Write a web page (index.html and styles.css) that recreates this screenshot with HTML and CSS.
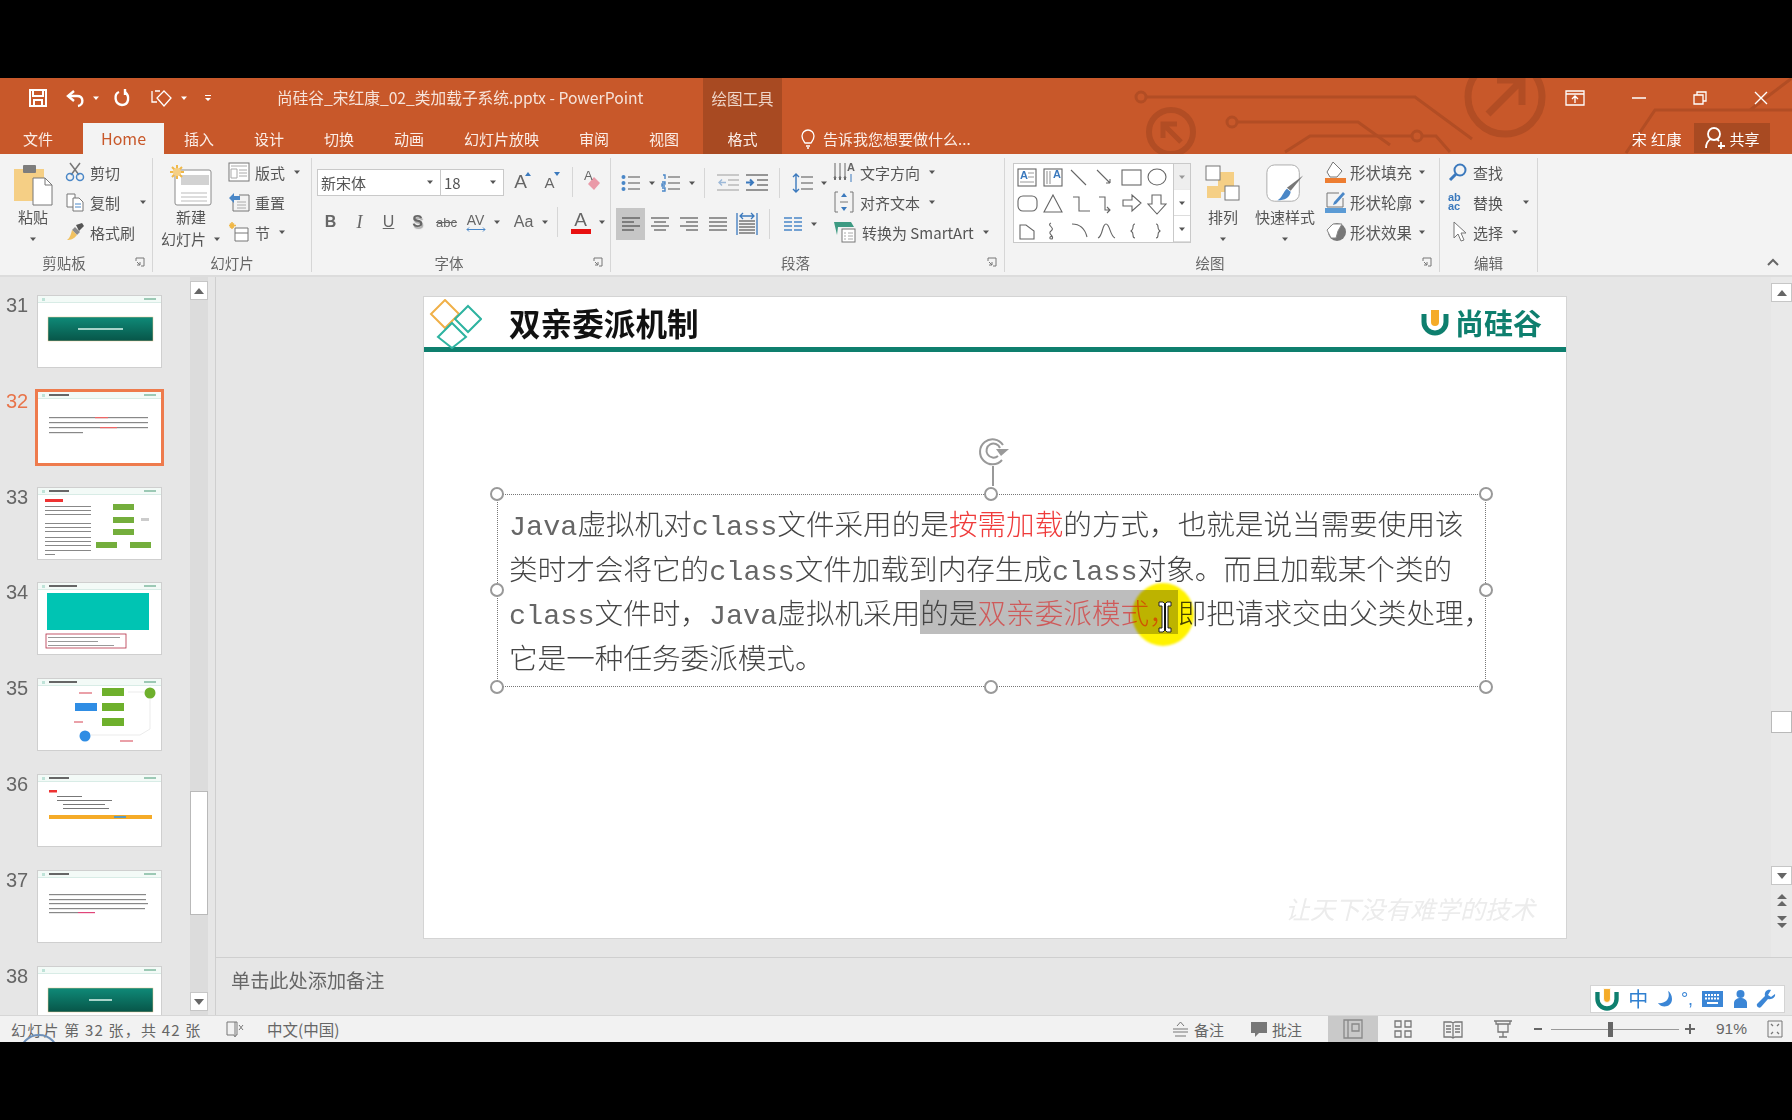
FILE: index.html
```html
<!DOCTYPE html>
<html lang="zh-CN">
<head>
  <meta charset="UTF-8" />
  <title>尚硅谷_宋红康_02_类加载子系统.pptx - PowerPoint</title>
  <link rel="stylesheet" href="styles.css">
</head>
<body>
<svg class="defs" width="0" height="0">
  <symbol id="th-head" viewBox="0 0 123 71">
    <rect x="0" y="0" width="123" height="6" fill="#f3faf7"/>
    <rect x="0" y="6" width="123" height=".6" fill="#bfe0d6"/>
    <rect x="4" y="2" width="3" height="3" fill="#bfe3d8"/>
    <rect x="106" y="2" width="12" height="2" fill="#9cc9b5"/>
  </symbol>
  <symbol id="caret" viewBox="0 0 8 8"><path d="M1 2.500h6L4 6z" fill="currentColor"/></symbol>
</svg>

<div class="app">
  <header class="top">
    <svg class="circuit" width="1010" height="76" viewBox="782 78 1010 76" fill="none" stroke="#b24d24" stroke-width="3">
      <path d="M1146 97h269l57 42"/><circle cx="1141" cy="97" r="5"/>
      <path d="M1237 122h121l32 23"/><circle cx="1232" cy="122" r="5"/>
      <path d="M1285 152l25-16h102"/><path d="M1422 136h14l14 16"/><circle cx="1417" cy="136" r="5"/>
      <circle cx="1171" cy="132" r="22" stroke-width="6"/><path d="M1181 142l-18-18m0 14v-14h14" stroke-width="5"/>
      <circle cx="1505" cy="97" r="37" stroke-width="7"/><path d="M1488 114l34-34m-25 0h25v25" stroke-width="7"/>
      <path d="M1626 153l29-43h137M1750 110l42-32"/>
    </svg>
    <div class="title-row">
      <div class="qat">
        <svg class="q-save" width="20" height="20" viewBox="0 0 20 20" fill="none" stroke="#fff" stroke-width="2"><path d="M2 2h16v16H2z"/><path d="M5 2v6h10V2M6 18v-6h8v6"/></svg>
        <svg class="q-undo" width="21" height="20" viewBox="0 0 21 20" fill="none" stroke="#fff" stroke-width="2.400"><path d="M9 3L3 8l6 5"/><path d="M3 8h9c7 0 7 9 1 10"/></svg>
        <svg class="q-car" width="8" height="8"><use href="#caret"/></svg>
        <svg class="q-redo" width="18" height="20" viewBox="0 0 18 20" fill="none" stroke="#fff" stroke-width="2.400"><path d="M6 4C1 6 1 16 9 17c7 0 8-9 3-13"/><path d="M12 1v6"/></svg>
        <svg class="q-touch" width="24" height="20" viewBox="0 0 24 20" fill="none" stroke="#fff" stroke-width="1.300"><path d="M5 3h5M2 3v11h5"/><path d="M14 3l7 7-7 8-7-8z"/></svg>
        <svg class="q-car" width="8" height="8"><use href="#caret"/></svg>
        <svg class="q-more" width="10" height="10" viewBox="0 0 10 10" fill="#fff"><path d="M2 2h6v1H2zM2 5h6L5 8z"/></svg>
      </div>
      <div class="doc-title">尚硅谷_宋红康_02_类加载子系统.pptx - PowerPoint</div>
      <div class="ctx-head">绘图工具</div>
      <div class="win-btns">
        <svg width="20" height="16" viewBox="0 0 20 16" fill="none" stroke="#fff" stroke-width="1.300"><path d="M1 1h18v14H1zM1 4h18M10 13V6M7 9l3-3 3 3"/></svg>
        <svg width="14" height="16" viewBox="0 0 14 16" stroke="#fff" stroke-width="1.500"><path d="M0 8h14"/></svg>
        <svg width="14" height="14" viewBox="0 0 14 14" fill="none" stroke="#fff" stroke-width="1.300"><path d="M1 4h9v9H1zM4 4V1h9v9h-3"/></svg>
        <svg width="14" height="14" viewBox="0 0 14 14" stroke="#fff" stroke-width="1.400"><path d="M1 1l12 12M13 1L1 13"/></svg>
      </div>
    </div>
    <nav class="tab-row">
      <a class="tab tab-file">文件</a>
      <a class="tab tab-home">Home</a>
      <a class="tab">插入</a>
      <a class="tab">设计</a>
      <a class="tab">切换</a>
      <a class="tab">动画</a>
      <a class="tab">幻灯片放映</a>
      <a class="tab">审阅</a>
      <a class="tab">视图</a>
      <a class="tab tab-ctx">格式</a>
      <span class="tell">
        <svg width="14" height="20" viewBox="0 0 14 20" fill="none" stroke="#fff" stroke-width="1.300"><path d="M4 14C2 11 1 10 1 7a6 6 0 0 1 12 0c0 3-1 4-3 7zM5 17h4M6 19h2"/></svg>
        告诉我您想要做什么...
      </span>
      <span class="user">宋 红康</span>
      <span class="share">
        <svg width="22" height="24" viewBox="0 0 22 24" fill="none" stroke="#fff" stroke-width="1.800"><circle cx="10" cy="8" r="6"/><path d="M2 22c0-5 3-8 5-9M13 13l2 2M17 16v7M14 20h7"/></svg>
        共享
      </span>
    </nav>
  </header>

  <section class="ribbon">
    <div class="group g-clip">
      <div class="group-body">
        <div class="big-btn paste">
          <svg class="big-ico" width="40" height="42" viewBox="0 0 40 42"><rect x="1" y="5" width="30" height="32" fill="#f5cf85"/><rect x="10" y="1" width="13" height="8" rx="1" fill="#7d7d7d"/><path d="M20 14h12l7 7v20H20z" fill="#fff" stroke="#777"/><path d="M32 14v7h7" fill="none" stroke="#777"/></svg>
          <span>粘贴</span>
          <svg class="big-car" width="8" height="8"><use href="#caret"/></svg>
        </div>
        <div class="small-col">
          <div class="row"><svg width="20" height="20" viewBox="0 0 20 20" fill="none" stroke-width="1.500"><path d="M5 1l9 12M15 1L6 13" stroke="#777"/><circle cx="5" cy="15" r="3.500" stroke="#4a87c7"/><circle cx="15" cy="15" r="3.500" stroke="#4a87c7"/></svg><span>剪切</span></div>
          <div class="row"><svg width="20" height="20" viewBox="0 0 20 20" fill="#fff" stroke="#777"><path d="M2 2h8v13H2z"/><path d="M8 6h6l4 4v9H8z"/><path d="M10 12h6M10 15h6" stroke="#4a87c7"/></svg><span>复制</span><svg class="car wide" width="8" height="8"><use href="#caret"/></svg></div>
          <div class="row"><svg width="20" height="20" viewBox="0 0 20 20"><path d="M11 3l6-2 2 3-5 5z" fill="#555"/><path d="M10 5l5 5-3 3-5-5z" fill="#8a8a8a"/><path d="M7 8l5 5c-3 4-6 5-10 5 3-2 4-6 5-10z" fill="#f1c15f"/></svg><span>格式刷</span></div>
        </div>
      </div>
      <div class="group-label"><span>剪贴板</span><svg class="launch" width="10" height="10" viewBox="0 0 10 10" fill="none" stroke="#777"><path d="M1 4V1h8v8H6M2 5l3 3M5 5v3H2"/></svg></div>
    </div>

    <div class="group g-slides">
      <div class="group-body">
        <div class="big-btn new-slide">
          <svg class="big-ico" width="44" height="42" viewBox="0 0 44 42"><rect x="6" y="6" width="36" height="35" rx="2" fill="#fff" stroke="#8a8a8a"/><rect x="12" y="11" width="28" height="10" fill="#d2d2d2"/><path d="M12 29h26M12 33h26M12 37h26" stroke="#bbb"/><g stroke="#f0b848" stroke-width="2"><path d="M8 1v14M1 8h14M3 3l10 10M13 3L3 13"/></g><circle cx="8" cy="8" r="4" fill="#f5cf85"/></svg>
          <span>新建</span>
          <span class="with-car">幻灯片<svg class="car" width="8" height="8"><use href="#caret"/></svg></span>
        </div>
        <div class="small-col">
          <div class="row"><svg width="22" height="20" viewBox="0 0 22 20" fill="#fff" stroke="#777"><rect x="1" y="1" width="20" height="18"/><path d="M3 4h16M3 7h6v9H3zM11 8h8M11 11h8M11 14h8" stroke="#aaa"/></svg><span>版式</span><svg class="car" width="8" height="8"><use href="#caret"/></svg></div>
          <div class="row"><svg width="22" height="20" viewBox="0 0 22 20" fill="none" stroke="#777"><path d="M5 7v12h16V3H11"/><path d="M9 10h9M9 13h9M9 16h9" stroke="#aaa"/><path d="M1 6l5-5v3h6v4H6v3z" fill="#4a87c7" stroke="none"/></svg><span>重置</span></div>
          <div class="row"><svg width="22" height="20" viewBox="0 0 22 20" fill="#fff" stroke="#777"><path d="M7 6h13v13H7zM7 11h13"/><g stroke="#f0b848" stroke-width="1.500"><path d="M4 0v7M1 3.500h7M2 1.500l4 4M6 1.500l-4 4"/></g></svg><span>节</span><svg class="car" width="8" height="8"><use href="#caret"/></svg></div>
        </div>
      </div>
      <div class="group-label center"><span>幻灯片</span></div>
    </div>

    <div class="group g-font">
      <div class="group-body col">
        <div class="tool-row first">
          <div class="combo font-name"><span>新宋体</span><svg width="8" height="8"><use href="#caret"/></svg></div>
          <div class="combo font-size"><span>18</span><svg width="8" height="8"><use href="#caret"/></svg></div>
          <span class="ib glyph big-a">A<i class="up"></i></span>
          <span class="ib glyph small-a">A<i class="down"></i></span>
          <span class="sep"></span>
          <span class="ib eraser"><span class="glyph era-a">A</span><svg width="20" height="20" viewBox="0 0 20 20"><path d="M11 5l6 6-6 7-6-6z" fill="#ea9aa8"/></svg></span>
        </div>
        <div class="tool-row second">
          <span class="ib glyph bold">B</span>
          <span class="ib glyph ital">I</span>
          <span class="ib glyph under">U</span>
          <span class="ib glyph shad">S</span>
          <span class="ib glyph strike">abc</span>
          <span class="ib glyph av">AV<svg width="22" height="5" viewBox="0 0 22 5" fill="none" stroke="#4a87c7"><path d="M2 2.500h18M4 .5l-2 2 2 2M18 .5l2 2-2 2"/></svg></span>
          <svg class="car" width="8" height="8"><use href="#caret"/></svg>
          <span class="ib glyph case">Aa</span>
          <svg class="car" width="8" height="8"><use href="#caret"/></svg>
          <span class="sep"></span>
          <span class="ib glyph color">A</span>
          <svg class="car" width="8" height="8"><use href="#caret"/></svg>
        </div>
      </div>
      <div class="group-label"><span>字体</span><svg class="launch" width="10" height="10" viewBox="0 0 10 10" fill="none" stroke="#777"><path d="M1 4V1h8v8H6M2 5l3 3M5 5v3H2"/></svg></div>
    </div>

    <div class="group g-para">
      <div class="group-body">
        <div class="para-left">
          <div class="tool-row first">
            <span class="ib"><svg width="20" height="18" viewBox="0 0 20 18" stroke="#888" stroke-width="1.400"><path d="M7 3h12M7 9h12M7 15h12"/><g fill="#4a87c7" stroke="none"><circle cx="2.500" cy="3" r="2"/><circle cx="2.500" cy="9" r="2"/><circle cx="2.500" cy="15" r="2"/></g></svg></span>
            <svg class="car" width="8" height="8"><use href="#caret"/></svg>
            <span class="ib"><svg width="20" height="20" viewBox="0 0 20 20" stroke="#888" stroke-width="1.400" fill="none"><path d="M7 4h12M7 10h12M7 16h12"/><g stroke="#4a87c7"><path d="M2 2h2v4M1 9h3v2H1v2h3M1 15h3v3H1"/></g></svg></span>
            <svg class="car" width="8" height="8"><use href="#caret"/></svg>
            <span class="sep"></span>
            <span class="ib"><svg width="24" height="18" viewBox="0 0 24 18" stroke="#bbb" stroke-width="1.400"><path d="M1 1h22M12 6h11M12 11h11M1 16h22"/><path d="M10 8.500H3m3-3l-3 3 3 3" stroke="#9db9d8" fill="none"/></svg></span>
            <span class="ib"><svg width="24" height="18" viewBox="0 0 24 18" stroke="#777" stroke-width="1.400"><path d="M1 1h22M12 6h11M12 11h11M1 16h22"/><path d="M1 8.500h7m-3-3l3 3-3 3" stroke="#3b79bd" fill="none" stroke-width="2"/></svg></span>
            <span class="sep"></span>
            <span class="ib"><svg width="22" height="22" viewBox="0 0 22 22" stroke="#888" stroke-width="1.400" fill="none"><path d="M9 5h12M9 11h12M9 17h12"/><path d="M4 2v18M1 5l3-3 3 3M1 17l3 3 3-3" stroke="#3b79bd"/></svg></span>
            <svg class="car" width="8" height="8"><use href="#caret"/></svg>
          </div>
          <div class="tool-row second">
            <span class="ib on"><svg width="20" height="16" viewBox="0 0 20 16" stroke="#666" stroke-width="1.500"><path d="M1 2h18M1 6h12M1 10h18M1 14h12"/></svg></span>
            <span class="ib"><svg width="20" height="16" viewBox="0 0 20 16" stroke="#777" stroke-width="1.500"><path d="M1 2h18M4 6h12M1 10h18M4 14h12"/></svg></span>
            <span class="ib"><svg width="20" height="16" viewBox="0 0 20 16" stroke="#777" stroke-width="1.500"><path d="M1 2h18M7 6h12M1 10h18M7 14h12"/></svg></span>
            <span class="ib"><svg width="20" height="16" viewBox="0 0 20 16" stroke="#777" stroke-width="1.500"><path d="M1 2h18M1 6h18M1 10h18M1 14h18"/></svg></span>
            <span class="ib"><svg width="22" height="24" viewBox="0 0 22 24" stroke="#777" stroke-width="1.300" fill="none"><path d="M3 9h16M3 12h16M3 15h16M3 18h16M3 21h16"/><path d="M1 1v22M21 1v22M4 4h14M7 1L4 4l3 3M15 1l3 3-3 3" stroke="#3b79bd"/></svg></span>
            <span class="sep"></span>
            <span class="ib"><svg width="20" height="16" viewBox="0 0 20 16" stroke="#4a87c7" stroke-width="1.500"><path d="M1 2h8M11 2h8M1 6h8M11 6h8M1 10h8M11 10h8M1 14h8M11 14h8"/></svg></span>
            <svg class="car" width="8" height="8"><use href="#caret"/></svg>
          </div>
        </div>
        <div class="small-col">
          <div class="row"><svg width="22" height="24" viewBox="0 0 22 24" stroke="#666" fill="none"><path d="M2 3v17M7 3v17M12 3v17"/><path d="M2 20l-1-3h2zM7 20l-1-3h2zM12 20l-1-3h2z"/><text x="14" y="11" class="svg-a">A</text><path d="M18 14v8" stroke="#3b79bd"/></svg><span>文字方向</span><svg class="car" width="8" height="8"><use href="#caret"/></svg></div>
          <div class="row"><svg width="22" height="24" viewBox="0 0 22 24" fill="none" stroke="#777"><path d="M5 2H2v20h3M17 2h3v20h-3"/><path d="M7 12h8"/><path d="M11 3l-3 4h6zM11 21l-3-4h6z" fill="#3b79bd" stroke="none"/></svg><span>对齐文本</span><svg class="car" width="8" height="8"><use href="#caret"/></svg></div>
          <div class="row"><svg width="24" height="24" viewBox="0 0 24 24" fill="#fff" stroke="#777"><path d="M1 2h17l3 5H5l-1 8z" fill="#3d9a82" stroke="none"/><rect x="9" y="9" width="13" height="13"/><path d="M11 13h2M15 13h5M11 16h2M15 16h5M11 19h2M15 19h5" stroke="#aaa"/></svg><span>转换为 SmartArt</span><svg class="car" width="8" height="8"><use href="#caret"/></svg></div>
        </div>
      </div>
      <div class="group-label"><span>段落</span><svg class="launch" width="10" height="10" viewBox="0 0 10 10" fill="none" stroke="#777"><path d="M1 4V1h8v8H6M2 5l3 3M5 5v3H2"/></svg></div>
    </div>

    <div class="group g-draw">
      <div class="group-body">
        <div class="gallery">
          <svg width="160" height="80" viewBox="0 0 160 80" fill="none" stroke="#666" stroke-width="1.100">
            <rect x="5" y="6" width="18" height="17"/><text x="7" y="16" class="svg-a blue">A</text><path d="M15 10h6M15 14h6M7 19h14" stroke="#999"/>
            <rect x="31" y="6" width="18" height="17"/><path d="M34 8v13M37 8v13" stroke="#999"/><text x="40" y="15" class="svg-a blue">A</text>
            <path d="M58 7l15 15M84 7l13 13M97 20v-4M97 20h-4"/>
            <rect x="109" y="7" width="19" height="15"/><ellipse cx="144" cy="14" rx="9" ry="8"/>
            <rect x="5" y="33" width="19" height="15" rx="5"/><path d="M40 32l9 17H31zM60 34h6v14h11M86 34h6v13h5m-3-3l3 3-3 3"/>
            <path d="M110 37h9v-5l9 8-9 8v-5h-9zM139 32h9v9h5l-9 10-9-10h4z"/>
            <path d="M7 62h6l8 6v8H7zM38 60c-5 2 5 5 0 8-4 3 4 5 1 8-3 0-3-2 0-3"/>
            <path d="M59 61c8 0 13 5 15 13M85 75c5-2 4-14 8-14s4 12 9 14M122 61c-2 0-2 1-2 3 0 3-1 3-2 4 1 1 2 1 2 4 0 2 0 3 2 3M143 61c2 0 2 1 2 3 0 3 1 3 2 4-1 1-2 1-2 4 0 2 0 3-2 3"/>
          </svg>
          <div class="gal-scroll">
            <span class="dim"><svg width="8" height="8"><use href="#caret"/></svg></span>
            <span><svg width="8" height="8"><use href="#caret"/></svg></span>
            <span><svg width="8" height="8"><use href="#caret"/></svg></span>
          </div>
        </div>
        <div class="big-btn arrange">
          <svg class="big-ico" width="36" height="42" viewBox="0 0 36 42"><rect x="13" y="8" width="16" height="20" fill="#f5cf85"/><rect x="1" y="2" width="14" height="14" fill="#fff" stroke="#777"/><rect x="2" y="22" width="14" height="12" fill="#f5cf85"/><rect x="20" y="22" width="14" height="14" fill="#fff" stroke="#777"/></svg>
          <span>排列</span>
          <svg class="big-car" width="8" height="8"><use href="#caret"/></svg>
        </div>
        <div class="big-btn quick">
          <svg class="big-ico" width="40" height="44" viewBox="0 0 40 44"><rect x="1" y="1" width="34" height="38" rx="8" fill="#fff" stroke="#aaa"/><path d="M39 12L26 28l-4-3z" fill="#777"/><path d="M22 26l4 3c-1 6-6 9-14 9 5-2 6-9 10-12z" fill="#4a87c7"/></svg>
          <span>快速样式</span>
          <svg class="big-car" width="8" height="8"><use href="#caret"/></svg>
        </div>
        <div class="small-col">
          <div class="row"><svg width="22" height="24" viewBox="0 0 22 24"><path d="M8 2l9 9-5 6H5L2 12z" fill="#fff" stroke="#777"/><rect x="0" y="18" width="21" height="5" fill="#ed7d31"/></svg><span>形状填充</span><svg class="car" width="8" height="8"><use href="#caret"/></svg></div>
          <div class="row"><svg width="22" height="24" viewBox="0 0 22 24" fill="none"><path d="M14 3H2v14h16V8" stroke="#777"/><path d="M18 2l2 2-9 10-3 1 1-3z" fill="#4a87c7"/><rect x="0" y="18" width="21" height="5" fill="#5b9bd5"/></svg><span>形状轮廓</span><svg class="car" width="8" height="8"><use href="#caret"/></svg></div>
          <div class="row"><svg width="22" height="22" viewBox="0 0 22 22"><circle cx="12" cy="11" r="9" fill="#777"/><path d="M2 9l6-6h9l-4 7-2 7H6z" fill="#fff" stroke="#888"/></svg><span>形状效果</span><svg class="car" width="8" height="8"><use href="#caret"/></svg></div>
        </div>
      </div>
      <div class="group-label"><span>绘图</span><svg class="launch" width="10" height="10" viewBox="0 0 10 10" fill="none" stroke="#777"><path d="M1 4V1h8v8H6M2 5l3 3M5 5v3H2"/></svg></div>
    </div>

    <div class="group g-edit">
      <div class="group-body">
        <div class="small-col">
          <div class="row"><svg width="20" height="20" viewBox="0 0 20 20" fill="none" stroke="#3b79bd" stroke-width="2"><circle cx="12" cy="8" r="5.500"/><path d="M8 12l-6 6" stroke-width="3"/></svg><span>查找</span></div>
          <div class="row"><span class="ab-ac">ab<br>ac</span><span>替换</span><svg class="car wide" width="8" height="8"><use href="#caret"/></svg></div>
          <div class="row"><svg width="20" height="22" viewBox="0 0 20 22" fill="#fff" stroke="#777"><path d="M6 1v16l4-4 3 7 3-1-3-7h5z"/></svg><span>选择</span><svg class="car" width="8" height="8"><use href="#caret"/></svg></div>
        </div>
      </div>
      <div class="group-label center"><span>编辑</span></div>
    </div>

    <div class="ribbon-end">
      <svg width="14" height="8" viewBox="0 0 14 8" fill="none" stroke="#666" stroke-width="2"><path d="M2 7l5-5 5 5"/></svg>
    </div>
  </section>

  <main class="work">
    <aside class="pane">
      <div class="thumbs">
        <div class="thumb-item"><span class="num">31</span><div class="thumb">
          <svg viewBox="0 0 123 71"><use href="#th-head" width="123" height="71"/><defs><linearGradient id="tealg" x1="0" y1="0" x2="0" y2="1"><stop offset="0" stop-color="#0f8a78"/><stop offset="1" stop-color="#075548"/></linearGradient></defs><rect x="10" y="21" width="105" height="24" fill="url(#tealg)" stroke="#f1c995" stroke-width=".5"/><rect x="40" y="32" width="45" height="2" fill="#cfeee5" opacity=".8"/></svg>
        </div></div>
        <div class="thumb-item"><span class="num cur">32</span><div class="thumb active">
          <svg viewBox="0 0 123 71"><use href="#th-head" width="123" height="71"/><rect x="11" y="2" width="20" height="2" fill="#666"/><g fill="#888"><rect x="11" y="25" width="99" height="1.200"/><rect x="11" y="30" width="99" height="1.200"/><rect x="11" y="35" width="99" height="1.200"/><rect x="11" y="40" width="34" height="1.200"/></g><rect x="57" y="25" width="13" height="1.200" fill="#e66"/><rect x="62" y="35" width="17" height="1.200" fill="#e66"/></svg>
        </div></div>
        <div class="thumb-item"><span class="num">33</span><div class="thumb">
          <svg viewBox="0 0 123 71"><use href="#th-head" width="123" height="71"/><rect x="11" y="2" width="20" height="2" fill="#666"/><rect x="7" y="11" width="18" height="3" fill="#e33"/><g fill="#888"><rect x="7" y="18" width="46" height="1"/><rect x="7" y="22" width="46" height="1"/><rect x="7" y="26" width="46" height="1"/><rect x="7" y="35" width="46" height="1"/><rect x="7" y="39" width="46" height="1"/><rect x="7" y="43" width="46" height="1"/><rect x="7" y="49" width="46" height="1"/><rect x="7" y="53" width="46" height="1"/><rect x="7" y="57" width="46" height="1"/><rect x="7" y="62" width="46" height="1"/><rect x="7" y="66" width="10" height="1"/></g><g fill="#74ae3c"><rect x="75" y="16" width="21" height="6"/><rect x="75" y="29" width="21" height="6"/><rect x="75" y="41" width="21" height="6"/><rect x="58" y="54" width="21" height="6"/><rect x="92" y="54" width="21" height="6"/></g><rect x="103" y="30" width="8" height="3" fill="#ccc"/></svg>
        </div></div>
        <div class="thumb-item"><span class="num">34</span><div class="thumb">
          <svg viewBox="0 0 123 71"><use href="#th-head" width="123" height="71"/><rect x="11" y="2" width="28" height="2" fill="#666"/><rect x="9" y="10" width="102" height="37" fill="#00c4b3"/><rect x="8" y="51" width="80" height="14" fill="#fff" stroke="#b32d45" stroke-width=".8"/><g fill="#999"><rect x="10" y="54" width="72" height="1"/><rect x="10" y="58" width="50" height="1"/><rect x="10" y="62" width="66" height="1"/></g></svg>
        </div></div>
        <div class="thumb-item"><span class="num">35</span><div class="thumb">
          <svg viewBox="0 0 123 71"><use href="#th-head" width="123" height="71"/><rect x="11" y="2" width="28" height="2" fill="#666"/><g fill="#6eb02c"><rect x="64" y="9" width="22" height="8"/><rect x="64" y="24" width="22" height="8"/><rect x="64" y="39" width="22" height="8"/><circle cx="112" cy="14" r="5.500"/></g><rect x="37" y="24" width="22" height="8" fill="#2f8de4"/><circle cx="47" cy="57" r="5.500" fill="#2f8de4"/><g fill="none" stroke="#ddd" stroke-width=".6"><path d="M90 13h16M112 20v30l-10 6H53"/></g><g fill="#eaa0a8"><rect x="41" y="13" width="13" height="2"/><rect x="36" y="42" width="9" height="2"/><rect x="82" y="61" width="13" height="2"/></g></svg>
        </div></div>
        <div class="thumb-item"><span class="num">36</span><div class="thumb">
          <svg viewBox="0 0 123 71"><use href="#th-head" width="123" height="71"/><rect x="11" y="2" width="20" height="2" fill="#666"/><rect x="11" y="15" width="8" height="2.500" fill="#e33"/><g fill="#777"><rect x="19" y="21" width="25" height="1"/><rect x="19" y="25" width="55" height="1"/><rect x="25" y="29" width="42" height="1"/><rect x="25" y="33" width="46" height="1"/></g><rect x="11" y="40" width="103" height="4" fill="#f5ab28"/><rect x="76" y="41" width="12" height="2" fill="#5a9ac0"/></svg>
        </div></div>
        <div class="thumb-item"><span class="num">37</span><div class="thumb">
          <svg viewBox="0 0 123 71"><use href="#th-head" width="123" height="71"/><rect x="11" y="2" width="20" height="2" fill="#666"/><g fill="#888"><rect x="11" y="23" width="97" height="1.200"/><rect x="11" y="28" width="97" height="1.200"/><rect x="11" y="32" width="99" height="1.200"/><rect x="11" y="37" width="96" height="1.200"/><rect x="11" y="41" width="29" height="1.200"/></g><rect x="40" y="41" width="17" height="1.200" fill="#e0457a"/></svg>
        </div></div>
        <div class="thumb-item"><span class="num">38</span><div class="thumb">
          <svg viewBox="0 0 123 71"><use href="#th-head" width="123" height="71"/><rect x="10" y="21" width="105" height="24" fill="url(#tealg)" stroke="#f1c995" stroke-width=".5"/><rect x="51" y="32" width="23" height="2" fill="#cfeee5" opacity=".8"/></svg>
        </div></div>
      </div>
      <div class="pane-scroll">
        <button class="sb-btn"><svg width="10" height="6" viewBox="0 0 10 6"><path d="M0 6l5-6 5 6z" fill="#666"/></svg></button>
        <div class="sb-thumb"></div>
        <button class="sb-btn"><svg width="10" height="6" viewBox="0 0 10 6"><path d="M0 0l5 6 5-6z" fill="#666"/></svg></button>
      </div>
    </aside>

    <div class="editor">
      <div class="stage-row">
        <div class="stage">
          <article class="slide">
            <div class="slide-head">
              <svg class="slide-mark" width="56" height="50" viewBox="0 0 56 50" fill="none" stroke-width="2">
                <path d="M19 1l14 14-14 14L5 15z" stroke="#f0b048"/>
                <path d="M43 7l13 13-13 13-13-13z" stroke="#2eb3a0" transform="translate(-1 0)"/>
                <path d="M26 24l14 14-14 11-14-11z" stroke="#2eb3a0"/>
              </svg>
              <h1 class="slide-title">双亲委派机制</h1>
              <svg class="brand-u" width="30" height="30" viewBox="0 0 30 30" fill="none"><path d="M4 7v8a11 11 0 0 0 22 0V7" stroke="#0e7f6e" stroke-width="5"/><path d="M11 3v12a4 4 0 0 0 8 0V3z" fill="#f5ab28"/></svg>
              <span class="brand-name">尚硅谷</span>
            </div>
            <div class="textbox">
              <p class="copy"><span class="mono">Java</span>虚拟机对<span class="mono">class</span>文件采用的是<span class="red">按需加载</span>的方式，也就是说当需要使用该</p>
              <p class="copy">类时才会将它的<span class="mono">class</span>文件加载到内存生成<span class="mono">class</span>对象。而且加载某个类的</p>
              <p class="copy"><span class="mono">class</span>文件时，<span class="mono">Java</span>虚拟机采用<span class="sel">的是<span class="red">双亲委派模式，</span></span>即把请求交由父类处理，</p>
              <p class="copy">它是一种任务委派模式。</p>
              <span class="handle h-tl"></span><span class="handle h-tc"></span><span class="handle h-tr"></span>
              <span class="handle h-ml"></span><span class="handle h-mr"></span>
              <span class="handle h-bl"></span><span class="handle h-bc"></span><span class="handle h-br"></span>
              <svg class="rotate" width="36" height="50" viewBox="0 0 36 50" fill="none" stroke="#999" stroke-width="2"><path d="M18 30v20"/><path d="M27 24A12.500 12.500 0 1 1 28 9"/><path d="M23 20a7 7 0 1 1 2-8"/><path d="M34 13l-8 7-5-7z" fill="#999" stroke="none"/></svg>
            </div>
            <div class="spot"></div>
            <svg class="ibeam" width="16" height="32" viewBox="0 0 16 32"><path d="M2 1h4l2 2 2-2h4v4h-3v22h3v4h-4l-2-2-2 2H2v-4h3V5H2z" fill="#fff" stroke="#222"/><path d="M7 3h2v26H7z" fill="#111"/></svg>
            <div class="watermark">让天下没有难学的技术</div>
          </article>
        </div>
        <div class="v-scroll">
          <button class="sb-btn"><svg width="10" height="6" viewBox="0 0 10 6"><path d="M0 6l5-6 5 6z" fill="#666"/></svg></button>
          <div class="sb-thumb"></div>
          <button class="sb-btn"><svg width="10" height="6" viewBox="0 0 10 6"><path d="M0 0l5 6 5-6z" fill="#666"/></svg></button>
          <svg class="page-btn" width="12" height="14" viewBox="0 0 12 14" fill="#666"><path d="M1 6l5-5 5 5zM1 13l5-5 5 5z"/></svg>
          <svg class="page-btn" width="12" height="14" viewBox="0 0 12 14" fill="#666"><path d="M1 1l5 5 5-5zM1 8l5 5 5-5z"/></svg>
        </div>
      </div>
      <div class="notes">单击此处添加备注</div>
    </div>

    <div class="ime">
      <svg width="26" height="26" viewBox="0 0 30 30" fill="none"><path d="M4 7v8a11 11 0 0 0 22 0V7" stroke="#0e7f6e" stroke-width="5"/><path d="M11 3v12a4 4 0 0 0 8 0V3z" fill="#f5ab28" stroke="#fff"/></svg>
      <span class="ime-zh">中</span>
      <svg width="16" height="18" viewBox="0 0 16 18"><path d="M11 1c3 8-3 13-10 12 4 6 14 4 14-4 0-4-2-7-4-8z" fill="#3b86d6"/></svg>
      <span class="ime-punct">°,</span>
      <svg width="23" height="18" viewBox="0 0 23 18"><rect x="1" y="1" width="21" height="16" fill="#3b86d6"/><path d="M4 5h15M4 8.500h15" stroke="#fff" stroke-width="2" stroke-dasharray="2 1"/><path d="M6 13h11" stroke="#fff" stroke-width="2"/></svg>
      <svg width="15" height="20" viewBox="0 0 15 20" fill="#3b86d6"><circle cx="7.500" cy="5" r="4"/><path d="M1 19v-5c0-3 3-5 6.500-5s6.500 2 6.500 5v5z"/></svg>
      <svg width="20" height="20" viewBox="0 0 20 20" fill="#3b86d6"><path d="M19 5l-4 3-3-2 3-5c-4-1-7 2-6 6L1 15c-1 2 2 5 4 3l7-8c4 1 8-2 7-5z"/></svg>
    </div>
  </main>

  <footer class="status">
    <span class="st-count">幻灯片 第 32 张，共 42 张</span>
    <svg class="st-spell" width="20" height="18" viewBox="0 0 20 18" fill="none" stroke="#777"><path d="M9 2H2v13h7l1 2 1-2h1V2h-3M10 2v13"/><path d="M14 5l4 5M18 5l-4 5"/></svg>
    <span class="st-lang">中文(中国)</span>
    <span class="st-fill"></span>
    <svg width="15" height="16" viewBox="0 0 15 16" stroke="#777" fill="none"><path d="M0 8h15M0 11h15M2 15h11M4 5l3.500-4L11 5"/></svg>
    <span class="st-notes">备注</span>
    <svg width="16" height="16" viewBox="0 0 16 16" fill="#777"><path d="M0 1h16v11H8l-4 4v-4H0z"/></svg>
    <span class="st-comments">批注</span>
    <span class="view on"><svg width="20" height="20" viewBox="0 0 20 20" fill="none" stroke="#888" stroke-width="1.300"><path d="M1 1h18v18H1zM5 1v18M9 5h7v7H9z"/></svg></span>
    <span class="view"><svg width="20" height="20" viewBox="0 0 20 20" fill="none" stroke="#777" stroke-width="1.300"><path d="M2 2h6v6H2zM12 2h6v6h-6zM2 12h6v6H2zM12 12h6v6h-6z"/></svg></span>
    <span class="view"><svg width="20" height="20" viewBox="0 0 20 20" fill="none" stroke="#777" stroke-width="1.300"><path d="M1 3h7l2 1 2-1h7v15h-7l-2 1-2-1H1zM10 4v15M3 7h5M3 10h5M3 13h5M12 7h5M12 10h5M12 13h5"/></svg></span>
    <span class="view"><svg width="20" height="20" viewBox="0 0 20 20" fill="none" stroke="#777" stroke-width="1.300"><path d="M1 2h18M3 2v3h14V2M5 5v8h10V5M10 13v5M6 18h8"/></svg></span>
    <span class="zoom-minus"></span>
    <span class="slider"><i></i></span>
    <span class="zoom-plus"></span>
    <span class="zoom-pct">91%</span>
    <svg class="st-fit" width="16" height="18" viewBox="0 0 16 18" fill="none" stroke="#777"><path d="M1 1h14v16H1z"/><path d="M4 4l2 2M12 4l-2 2M4 14l2-2M12 14l-2-2" stroke-width="1.300"/></svg>
  </footer>
</div>
</body>
</html>
```

FILE: styles.css
```css
* {
  box-sizing: border-box;
}
html, body {
  margin: 0;
  height: 100%;
}
body {
  background: #000;
  font-family: "Noto Sans CJK SC", "Noto Sans", sans-serif;
  color: #555;
  overflow: hidden;
}
svg {
  display: block;
  flex: none;
}
.defs {
  position: absolute;
}
.app {
  position: relative;
  width: 1792px;
  height: 964px;
  margin-top: 78px;
  display: flex;
  flex-direction: column;
  overflow: hidden;
}

/* title bar and tabs */
.top {
  position: relative;
  background: #c8582a;
  color: #fff;
  height: 76px;
  flex: none;
}
.circuit {
  position: absolute;
  right: 0;
  top: 0;
}
.title-row {
  position: relative;
  height: 40px;
  display: flex;
  align-items: stretch;
}
.qat {
  width: 277px;
  display: flex;
  align-items: center;
  padding-left: 28px;
}
.q-undo { margin-left: 17px; }
.q-car { margin-left: 6px; color: #fff; }
.q-redo { margin-left: 13px; }
.q-touch { margin-left: 19px; }
.q-more { margin-left: 15px; }
.doc-title {
  width: 426px;
  font-size: 15.700px;
  line-height: 40px;
  color: #f6e3da;
}
.ctx-head {
  width: 79px;
  background: #a84a22;
  text-align: center;
  font-size: 15.500px;
  line-height: 40px;
  color: #eed5c8;
}
.win-btns {
  margin-left: auto;
  display: flex;
  align-items: center;
  padding-right: 24px;
  gap: 47px;
}
.tab-row {
  position: relative;
  height: 36px;
  display: flex;
  align-items: flex-end;
  font-size: 15px;
}
.tab {
  display: block;
  height: 31px;
  line-height: 31px;
  padding: 0 20px;
  color: #fbeee8;
}
.tab-file {
  width: 83px;
  padding: 0 0 0 23px;
}
.tab-home {
  width: 81px;
  padding: 0;
  text-align: center;
  background: #f3f3f3;
  color: #c8582a;
  font-size: 16px;
}
.tab-ctx {
  margin-left: 4px;
  width: 79px;
  height: 36px;
  line-height: 41px;
  padding: 0;
  text-align: center;
  background: #a84a22;
}
.tell {
  margin-left: 19px;
  height: 31px;
  display: flex;
  align-items: center;
  gap: 8px;
  font-size: 15px;
  color: #fbeee8;
}
.user {
  margin-left: auto;
  height: 31px;
  line-height: 31px;
  margin-right: 12px;
  letter-spacing: .5px;
}
.share {
  width: 76px;
  height: 30px;
  margin-bottom: 1px;
  margin-right: 22px;
  background: #a84a22;
  display: flex;
  align-items: center;
  justify-content: center;
  gap: 3px;
}

/* ribbon */
.ribbon {
  height: 123px;
  flex: none;
  background: #f3f3f3;
  border-bottom: 2px solid #dcdcdc;
  display: flex;
  padding-top: 4px;
  font-size: 15px;
  color: #555;
}
.group {
  display: flex;
  flex-direction: column;
  border-right: 1px solid #d6d6d6;
  height: 114px;
  flex: none;
}
.g-clip { width: 153px; }
.g-slides { width: 159px; }
.g-font { width: 299px; }
.g-para { width: 394px; }
.g-draw { width: 435px; }
.g-edit { width: 98px; }
.group-body {
  height: 94px;
  display: flex;
}
.group-body.col {
  flex-direction: column;
}
.group-label {
  display: flex;
  align-items: center;
  height: 20px;
  font-size: 14.500px;
  color: #666;
}
.group-label span {
  flex: 1;
  text-align: center;
}
.launch {
  margin-right: 7px;
  margin-left: 7px;
}
.big-btn {
  display: flex;
  flex-direction: column;
  align-items: center;
  padding-top: 6px;
  line-height: 22px;
  flex: none;
}
.big-ico {
  height: 42px;
  margin-bottom: 0;
}
.big-car {
  margin-top: 7px;
}
.paste { width: 48px; margin-left: 9px; }
.new-slide { width: 60px; margin-left: 8px; }
.arrange { width: 44px; margin-left: 10px; }
.quick { width: 64px; margin-left: 8px; }
.with-car {
  display: flex;
  align-items: center;
  gap: 4px;
  white-space: nowrap;
}
.small-col {
  display: flex;
  flex-direction: column;
  margin-left: 8px;
  margin-top: -1px;
}
.row {
  height: 30px;
  display: flex;
  align-items: center;
  gap: 5px;
  white-space: nowrap;
}
.car {
  margin-left: 3px;
}
.car.wide {
  margin-left: 14px;
}
.g-draw .row {
  gap: 3px;
}
.g-draw .row span {
  font-size: 15.500px;
}
.g-slides .small-col {
  margin-left: 7px;
}
.ab-ac {
  width: 20px;
  font: bold 11px/9px "Liberation Sans", sans-serif;
  color: #3b79bd;
}
.tool-row {
  display: flex;
  align-items: center;
  height: 40px;
}
.g-font .first { padding: 8px 0 0 5px; }
.g-font .second { padding: 8px 0 0 4px; }
.combo {
  height: 27px;
  background: #fff;
  border: 1px solid #c9c9c9;
  display: flex;
  align-items: center;
  justify-content: space-between;
  padding: 0 6px 0 3px;
  font-size: 15px;
}
.font-name { width: 124px; }
.font-size { width: 64px; margin-left: -1px; }
.ib {
  width: 29px;
  height: 32px;
  display: flex;
  align-items: center;
  justify-content: center;
  flex: none;
  position: relative;
}
.ib.on {
  background: #c6c6c6;
}
.sep {
  width: 1px;
  height: 30px;
  background: #d6d6d6;
  margin: 0 8px;
  flex: none;
}
.glyph {
  font-family: "Liberation Sans", sans-serif;
  color: #666;
  font-size: 16px;
}
.big-a { margin-left: 2px; font-size: 19px; }
.small-a { font-size: 15px; }
.up, .down {
  position: absolute;
  top: 6px;
  right: 4px;
  width: 0;
  height: 0;
  border: 3px solid transparent;
}
.up { border-bottom: 4px solid #3b79bd; top: 3px; }
.down { border-top: 4px solid #3b79bd; }
.eraser { margin-left: -3px; }
.era-a {
  position: absolute;
  left: 6px;
  top: 2px;
  font-size: 13px;
}
.bold { font-weight: bold; }
.ital { font-style: italic; font-family: "Liberation Serif", serif; font-size: 18px; }
.under { text-decoration: underline; }
.shad { font-weight: bold; text-shadow: 1px 2px 1px #aaa; }
.strike { text-decoration: line-through; font-size: 13px; }
.av { flex-direction: column; font-size: 14px; line-height: 14px; }
.case { font-size: 16px; margin-left: 8px; }
.color {
  flex-direction: column;
  font-size: 19px;
  line-height: 19px;
}
.color::after {
  content: "";
  width: 20px;
  height: 5px;
  background: #e81010;
}
.g-para .group-body { padding-left: 5px; }
.para-left {
  width: 216px;
  flex: none;
}
.para-left .first,
.para-left .second {
  padding-top: 0;
}
.para-left .first { margin-top: 5px; }
.para-left .second { margin-top: 1px; }
.g-para .small-col { margin-left: 1px; }
.gallery {
  margin: 5px 0 0 8px;
  width: 178px;
  height: 80px;
  display: flex;
  background: #fff;
  border: 1px solid #c9c9c9;
  flex: none;
}
.gallery > svg {
  margin: -1px 0 0 -1px;
}
.gal-scroll {
  width: 18px;
  display: flex;
  flex-direction: column;
  border-left: 1px solid #c9c9c9;
}
.gal-scroll span {
  flex: 1;
  display: flex;
  align-items: center;
  justify-content: center;
  border-bottom: 1px solid #ddd;
}
.gal-scroll .dim {
  background: #e4e4e4;
  opacity: .6;
}
.ribbon-end {
  flex: 1;
  display: flex;
  justify-content: flex-end;
  align-items: flex-end;
  padding: 0 12px 6px 0;
  height: 114px;
}

/* thumbnails */
.work {
  position: relative;
  flex: 1;
  display: flex;
  background: #e6e6e6;
  min-height: 0;
}
.pane {
  width: 216px;
  flex: none;
  display: flex;
  border-right: 1px solid #cfcfcf;
}
.thumbs {
  width: 190px;
  padding-top: 19px;
  display: flex;
  flex-direction: column;
  gap: 24.800px;
  overflow: hidden;
}
.thumb-item {
  display: flex;
  flex: none;
  height: 71px;
}
.num {
  width: 38px;
  padding-left: 6px;
  font-size: 20px;
  line-height: 18px;
  color: #666;
  font-family: "Liberation Sans", sans-serif;
}
.num.cur {
  color: #e8744a;
}
.thumb {
  width: 123px;
  height: 71px;
  background: #fff;
  outline: 1px solid #cfcfcf;
  flex: none;
}
.thumb.active {
  outline: 3px solid #ee7b4d;
}
.pane-scroll {
  width: 18px;
  padding: 4px 0;
  display: flex;
  flex-direction: column;
  background: #dcdcdc;
}
.sb-btn {
  width: 100%;
  height: 19px;
  padding: 0;
  background: #fff;
  border: 1px solid #c6c6c6;
  display: flex;
  align-items: center;
  justify-content: center;
  flex: none;
}
.sb-thumb {
  background: #fff;
  border: 1px solid #b9b9b9;
  flex: none;
}
.pane-scroll .sb-thumb {
  height: 124px;
  margin-top: auto;
  margin-bottom: 77px;
}

/* editing area */
.editor {
  flex: 1;
  display: flex;
  flex-direction: column;
  min-width: 0;
}
.stage-row {
  height: 681px;
  flex: none;
  display: flex;
  border-bottom: 1px solid #cfcfcf;
}
.stage {
  flex: 1;
  padding: 20px 0 0 208px;
}
.v-scroll {
  width: 21px;
  padding-top: 6px;
  display: flex;
  flex-direction: column;
  align-items: center;
  background: #e9e9e9;
}
.v-scroll .sb-thumb {
  width: 100%;
  height: 22px;
  margin-top: 409px;
  margin-bottom: 133px;
}
.page-btn {
  margin-top: 8px;
}
.notes {
  padding: 8px 0 0 15px;
  font-size: 19.200px;
  line-height: 28px;
  color: #666;
}
.slide {
  position: relative;
  width: 1142px;
  height: 641px;
  background: #fff;
  box-shadow: 0 0 0 1px #d4d4d4;
}
.slide-head {
  height: 55px;
  border-bottom: 5px solid #0e7f6e;
  display: flex;
  align-items: center;
  padding: 0 24px 0 2px;
}
.slide-mark {
  margin-top: 3px;
}
.slide-title {
  margin: 0 0 0 27px;
  font-size: 31.600px;
  font-weight: 700;
  color: #111;
}
.brand-u {
  margin-left: auto;
}
.brand-name {
  margin-left: 5px;
  font-size: 29px;
  font-weight: 700;
  color: #0e7f6e;
}
.textbox {
  position: absolute;
  left: 73px;
  top: 197px;
  width: 989px;
  height: 193px;
  padding: 6px 0 0 11px;
  border: 1px dotted #777;
}
.copy {
  margin: 0;
  height: 44.600px;
  line-height: 44.600px;
  font-size: 28.600px;
  font-weight: 300;
  color: #444;
  white-space: nowrap;
}
.mono {
  font-family: "Liberation Mono", monospace;
  font-size: 28.500px;
  color: #666;
}
.red {
  color: #ef3b3b;
}
.sel {
  display: inline-block;
  background: #bdbdbd;
  height: 44px;
}
.sel .red {
  color: #cf5a5a;
}
.handle {
  position: absolute;
  width: 14px;
  height: 14px;
  border-radius: 50%;
  background: #fff;
  border: 2px solid #999;
}
.h-tl, .h-tc, .h-tr { top: -8px; }
.h-ml, .h-mr { top: 88px; }
.h-bl, .h-bc, .h-br { bottom: -8px; }
.h-tl, .h-ml, .h-bl { left: -8px; }
.h-tc, .h-bc { left: 486px; }
.h-tr, .h-mr, .h-br { right: -8px; }
.rotate {
  position: absolute;
  left: 477px;
  top: -59px;
}
.spot {
  position: absolute;
  left: 708px;
  top: 286px;
  width: 62px;
  height: 63px;
  border-radius: 50%;
  background: #fff200;
  mix-blend-mode: multiply;
  filter: blur(1px);
}
.ibeam {
  position: absolute;
  left: 733px;
  top: 304px;
}
.watermark {
  position: absolute;
  left: 861px;
  top: 593px;
  font-size: 25px;
  line-height: 36px;
  font-style: italic;
  color: #ececec;
}
.svg-a {
  font: bold 11px "Liberation Sans", sans-serif;
  fill: #666;
  stroke: none;
}
.svg-a.blue {
  fill: #3b79bd;
}

/* floating input method bar */
.ime {
  position: absolute;
  left: 1590px;
  top: 708px;
  width: 195px;
  height: 28px;
  background: #fff;
  border: 1px solid #d4d4d4;
  display: flex;
  align-items: center;
  padding: 0 8px 0 3px;
  justify-content: space-between;
}
.ime-zh {
  font-size: 20px;
  color: #2f7fd0;
  line-height: 24px;
}
.ime-punct {
  font: 18px/20px "Liberation Sans", sans-serif;
  color: #3b86d6;
}

/* status bar */
.status {
  position: relative;
  height: 27px;
  flex: none;
  background: #f2f2f2;
  border-top: 1px solid #d6d6d6;
  display: flex;
  align-items: center;
  font-size: 14.500px;
  color: #666;
  padding-left: 11px;
}
.status::after {
  content: "";
  position: absolute;
  left: 19px;
  bottom: -32px;
  width: 36px;
  height: 36px;
  border: 2px solid #6f90b8;
  border-radius: 50%;
}
.st-count {
  width: 214px;
  white-space: nowrap;
  font-size: 15px;
  letter-spacing: 1.200px;
}
.st-lang {
  margin-left: 22px;
  font-size: 15.500px;
}
.st-fill {
  flex: 1;
}
.st-notes {
  margin: 0 27px 0 6px;
  font-size: 15px;
}
.st-comments {
  margin: 0 26px 0 5px;
  font-size: 15px;
}
.view {
  width: 50px;
  height: 26px;
  display: flex;
  align-items: center;
  justify-content: center;
}
.view.on {
  background: #c9c9c9;
}
.zoom-minus {
  width: 8px;
  height: 2px;
  background: #666;
  margin: 0 9px 0 6px;
}
.slider {
  position: relative;
  width: 128px;
  height: 1px;
  background: #999;
}
.slider i {
  position: absolute;
  left: 57px;
  top: -7px;
  width: 5px;
  height: 15px;
  background: #666;
}
.zoom-plus {
  position: relative;
  width: 10px;
  height: 2px;
  background: #666;
  margin: 0 21px 0 6px;
}
.zoom-plus::after {
  content: "";
  position: absolute;
  left: 4px;
  top: -4px;
  width: 2px;
  height: 10px;
  background: #666;
}
.zoom-pct {
  font-family: "Liberation Sans", sans-serif;
  font-size: 15.500px;
}
.st-fit {
  margin: 0 9px 0 20px;
}
```
